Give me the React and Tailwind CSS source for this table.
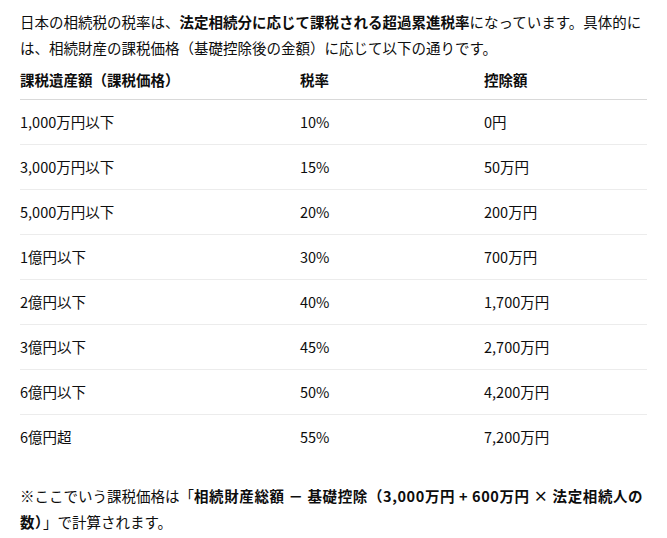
import React from 'react';

const rows = [
  ['1,000万円以下', '10%', '0円'],
  ['3,000万円以下', '15%', '50万円'],
  ['5,000万円以下', '20%', '200万円'],
  ['1億円以下', '30%', '700万円'],
  ['2億円以下', '40%', '1,700万円'],
  ['3億円以下', '45%', '2,700万円'],
  ['6億円以下', '50%', '4,200万円'],
  ['6億円超', '55%', '7,200万円'],
];

const App = () => {
  return (
    <div className="w-[667px] h-[538px] bg-white px-5 pt-[9px] text-[14.5px] leading-[26px] text-[#0d0d0d] font-['Noto_Sans_CJK_JP',sans-serif]">
      <p>
        日本の相続税の税率は、<b className="font-bold">法定相続分に応じて課税される超過累進税率</b>になっています。具体的には、相続財産の課税価格（基礎控除後の金額）に応じて以下の通りです。
      </p>
      <table className="w-full mt-[6px] border-collapse">
        <thead>
          <tr className="border-b border-[#d9d9d9]">
            <th className="w-[280px] text-left font-bold pb-[6px] pt-0">課税遺産額（課税価格）</th>
            <th className="w-[184px] text-left font-bold pb-[6px]">税率</th>
            <th className="text-left font-bold pb-[6px]">控除額</th>
          </tr>
        </thead>
        <tbody>
          {rows.map((r, i) => (
            <tr key={i} className={i < rows.length - 1 ? 'border-b border-[#ececec]' : ''}>
              <td className="h-[45px] py-0 align-middle">{r[0]}</td>
              <td className="h-[45px] py-0 align-middle">{r[1]}</td>
              <td className="h-[45px] py-0 align-middle">{r[2]}</td>
            </tr>
          ))}
        </tbody>
      </table>
      <p className="mt-[23px]">
        ※ここでいう課税価格は「<b className="font-bold tracking-[0.6px]">相続財産総額 － 基礎控除（3,000万円 + 600万円 × 法定相続人の数）</b>」で計算されます。
      </p>
    </div>
  );
};

export default App;
